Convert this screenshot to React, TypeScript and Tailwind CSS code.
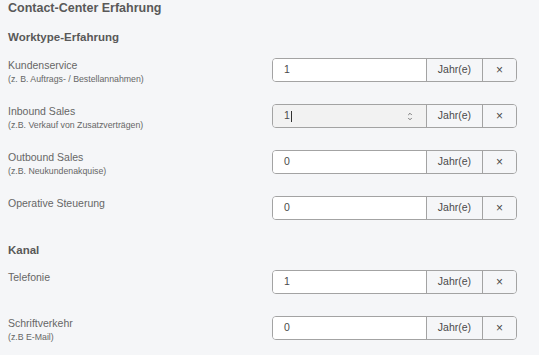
import { ChevronUp, ChevronDown } from 'lucide-react'

interface Row { label: string; hint?: string; value: string; active?: boolean }

const WORKTYPE: Row[] = [
  { label: 'Kundenservice', hint: '(z. B. Auftrags- / Bestellannahmen)', value: '1' },
  { label: 'Inbound Sales', hint: '(z.B. Verkauf von Zusatzverträgen)', value: '1', active: true },
  { label: 'Outbound Sales', hint: '(z.B. Neukundenakquise)', value: '0' },
  { label: 'Operative Steuerung', value: '0' },
]

const KANAL: Row[] = [
  { label: 'Telefonie', value: '1' },
  { label: 'Schriftverkehr', hint: '(z.B E-Mail)', value: '0' },
]

function YearRow({ row }: { row: Row }) {
  return (
    <div className="flex h-[24px] items-start justify-between">
      <div className="pt-px">
        <div className="text-[10.5px] leading-[13px] text-[#666]">{row.label}</div>
        {row.hint && <div className="mt-[2px] text-[8.75px] leading-[10px] text-[#666]">{row.hint}</div>}
      </div>
      <div className="flex h-[24px] w-[245px] rounded-[4px] border border-[#a3a3a3] overflow-hidden text-[10.5px] text-[#4a4a4a]">
        <div className={`flex flex-1 items-center pl-[11px] pr-[13px] ${row.active ? 'bg-[#f2f2f2]' : 'bg-white'}`}>
          <span>{row.value}</span>
          {row.active && <span className="ml-px h-[11px] w-px bg-[#333]" />}
          {row.active && (
            <span className="ml-auto flex flex-col items-center text-[#666]">
              <ChevronUp size={6} strokeWidth={3.5} className="-mb-px" />
              <ChevronDown size={6} strokeWidth={3.5} />
            </span>
          )}
        </div>
        <div className="flex w-[56px] items-center justify-center border-l border-[#a3a3a3] bg-[#f5f6f8]">Jahr(e)</div>
        <div className="flex w-[34px] items-center justify-center border-l border-[#a3a3a3] bg-[#f5f6f8] text-[12px]">×</div>
      </div>
    </div>
  )
}

export default function App() {
  return (
    <div className="min-h-screen bg-[#f5f6f8] pl-[8px] pr-[22px] pt-px font-['Liberation_Sans',Arial,sans-serif]">
      <h1 className="text-[12.5px] font-bold leading-[15px] text-[#595959]">Contact-Center Erfahrung</h1>
      <h2 className="mt-[13.5px] text-[11.5px] font-bold leading-[14px] text-[#595959]">Worktype-Erfahrung</h2>
      <div className="mt-[14.5px] flex flex-col gap-[22px]">
        {WORKTYPE.map(r => <YearRow key={r.label} row={r} />)}
      </div>
      <h2 className="mt-[22.5px] text-[11.5px] font-bold leading-[14px] text-[#595959]">Kanal</h2>
      <div className="mt-[13.5px] flex flex-col gap-[21.5px]">
        {KANAL.map(r => <YearRow key={r.label} row={r} />)}
      </div>
    </div>
  )
}
